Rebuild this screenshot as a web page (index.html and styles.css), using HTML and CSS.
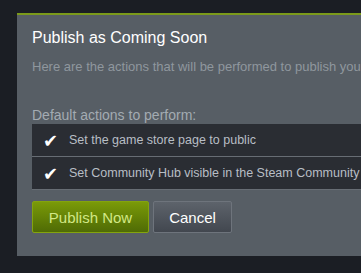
FILE: index.html
```html
<!DOCTYPE html>
<html lang="en">
<head>
  <meta charset="UTF-8">
  <title>Publish as Coming Soon</title>
  <link rel="stylesheet" href="styles.css">
</head>
<body>
  <div class="dialog">
    <h1 class="title">Publish as Coming Soon</h1>
    <p class="intro">Here are the actions that will be performed to publish your game page</p>

    <div class="label">Default actions to perform:</div>
    <div class="actions">
      <div class="action"><span class="check">&#10004;</span><span>Set the game store page to public</span></div>
      <div class="action"><span class="check">&#10004;</span><span>Set Community Hub visible in the Steam Community</span></div>
    </div>

    <div class="buttons">
      <button class="btn primary">Publish Now</button>
      <button class="btn cancel">Cancel</button>
    </div>
  </div>
</body>
</html>
```

FILE: styles.css
```css
body {
  margin: 0;
  background-color: #1b1e24;
  font-family: "Liberation Sans", Arial, sans-serif;
  overflow: hidden;
  padding: 13px 0 0 17px;
}
.dialog {
  background-color: #575e65;
  border-top: 2px solid #7b9a1a;
  padding: 14px 0 0 15px;
  height: 243px;
  box-sizing: border-box;
  white-space: nowrap;
  overflow: hidden;
}
.title {
  margin: 0;
  font-size: 16px;
  font-weight: normal;
  color: #ffffff;
}
.intro {
  margin: 12px 0 0;
  font-size: 13px;
  color: #8f979e;
}
.label {
  margin-top: 33px;
  font-size: 14px;
  color: #a3abb2;
}
.actions {
  margin-top: 1px;
}
.action {
  display: flex;
  align-items: center;
  height: 32px;
  background-color: #2a2d33;
  color: #b8bec5;
  font-size: 12.5px;
  border-bottom: 1px solid #676d74;
}
.check {
  flex-shrink: 0;
  width: 37px;
  text-align: center;
  color: #ffffff;
  font-family: "DejaVu Sans", sans-serif;
  font-size: 18px;
}
.buttons {
  margin-top: 11px;
  display: flex;
  gap: 4px;
}
.btn {
  height: 32px;
  border-radius: 2px;
  font-family: "Liberation Sans", Arial, sans-serif;
  font-size: 15px;
  padding: 0;
}
.primary {
  width: 117px;
  color: #d2e885;
  border: 1px solid #84a40d;
  background: linear-gradient(to bottom, #7a9a08, #4f6b05);
}
.cancel {
  width: 79px;
  color: #ffffff;
  border: 1px solid #6e747c;
  background: linear-gradient(to bottom, #5d636b, #42474f);
}
```
